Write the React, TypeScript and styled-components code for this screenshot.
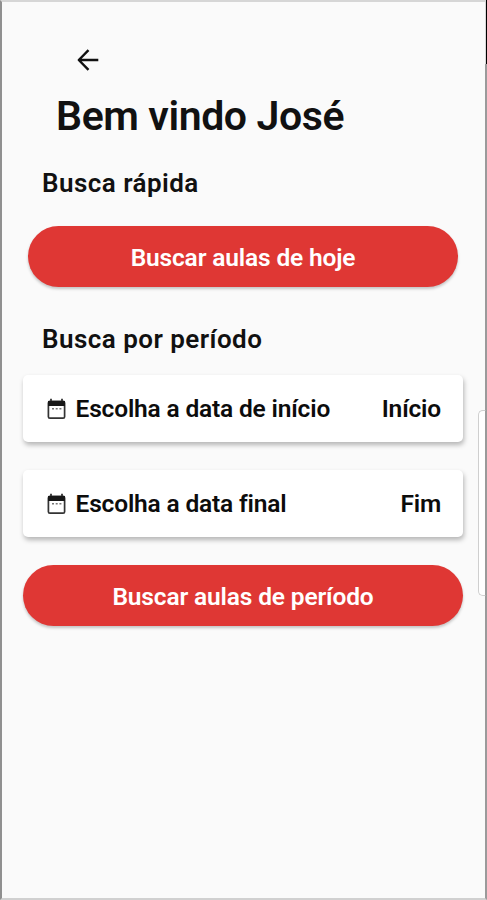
import React from "react";
import styled, { createGlobalStyle } from "styled-components";

const GlobalStyle = createGlobalStyle`
  * { box-sizing: border-box; }
  body { margin: 0; background: #fafafa; }
`;

const Frame = styled.div`
  position: relative;
  width: 487px;
  height: 900px;
  overflow: hidden;
`;

const Screen = styled.main`
  width: 100%;
  height: 100%;
  display: flex;
  flex-direction: column;
  padding: 46px 22px 0 21px;
  background: #fafafa;
  border-top: 2px solid #d6d6d6;
  border-bottom: 2px solid #d0d0d0;
  border-left: 2px solid #909090;
  border-right: 2px solid #9a9a9a;
  font-family: Roboto, "Noto Sans", sans-serif;
  font-weight: 600;
  color: #111;
`;

const BackButton = styled.button`
  width: 24px;
  height: 24px;
  margin-left: 53px;
  padding: 0;
  border: 0;
  background: none;
  color: #111;
  svg { display: block; }
`;

const Title = styled.h1`
  margin: 20px 0 0 33px;
  font-size: 41px;
  line-height: 48px;
  font-weight: 600;
  letter-spacing: -0.4px;
  white-space: nowrap;
`;

const SectionTitle = styled.h2<{ $top: number }>`
  margin: ${({ $top }) => $top}px 0 0 19px;
  font-size: 26px;
  line-height: 32px;
  font-weight: 600;
  letter-spacing: 0.46px;
  white-space: nowrap;
`;

const PillButton = styled.button<{ $top: number; $inset?: number }>`
  flex: none;
  height: 61px;
  margin: ${({ $top, $inset = 0 }) => `${$top}px ${$inset}px 0`};
  padding: 2px 0 0;
  border: 0;
  border-radius: 31px;
  background: #df3734;
  color: #fff;
  font: inherit;
  font-size: 24.5px;
  line-height: 59px;
  letter-spacing: -0.15px;
  box-shadow: 0 2px 3px rgba(0, 0, 0, 0.22);
`;

const DateCard = styled.div<{ $top: number }>`
  flex: none;
  display: flex;
  align-items: center;
  height: 67px;
  margin-top: ${({ $top }) => $top}px;
  padding: 0 22px 0 24px;
  border-radius: 5px;
  background: #fff;
  color: #0c0c0c;
  font-size: 24.5px;
  line-height: 30px;
  letter-spacing: -0.17px;
  white-space: nowrap;
  box-shadow: 1px 3px 5px rgba(0, 0, 0, 0.28);
`;

const CardLabel = styled.span`
  flex: 1;
  margin-left: 9.5px;
`;

const ScrollHandle = styled.div`
  position: absolute;
  top: 410px;
  right: 1px;
  width: 8px;
  height: 186px;
  border: 1px solid #cfcfcf;
  border-right-color: #9a9a9a;
  border-radius: 5px 0 0 5px;
  background: #fff;
`;

const EdgeMark = styled.div`
  position: absolute;
  top: 0;
  right: 0;
  width: 1px;
  height: 64px;
  background: #000;
  box-shadow: -1px 0 0 #d8d8d8;
`;

const ArrowIcon = () => (
  <svg width="24" height="24" viewBox="0 0 24 24" fill="none" stroke="currentColor" strokeWidth="2.4" strokeLinejoin="round">
    <path d="M22.3 12H3M12.5 2.2L2.8 12l9.7 9.8" />
  </svg>
);

const CalendarIcon = () => (
  <svg width="19" height="22" viewBox="0 0 19 22">
    <path d="M4 .8v4M15 .8v4" stroke="#333" strokeWidth="1.8" />
    <rect x="1.4" y="3.4" width="16.2" height="16.8" rx="1.5" fill="none" stroke="#333" strokeWidth="1.7" />
    <path d="M1 3h17v5H1z" fill="#181818" />
    <path d="M5 10.8h2M8.7 10.8h2M12.4 10.8h2" stroke="#777" strokeWidth="1.4" />
  </svg>
);

const DateField = ({ top, label, value }: { top: number; label: string; value: string }) => (
  <DateCard $top={top}>
    <CalendarIcon />
    <CardLabel>{label}</CardLabel>
    <span>{value}</span>
  </DateCard>
);

export default function App() {
  return (
    <>
      <GlobalStyle />
      <Frame>
        <Screen>
          <BackButton aria-label="Voltar">
            <ArrowIcon />
          </BackButton>
          <Title>Bem vindo José</Title>
          <SectionTitle $top={27}>Busca rápida</SectionTitle>
          <PillButton $top={27} $inset={5}>Buscar aulas de hoje</PillButton>
          <SectionTitle $top={36}>Busca por período</SectionTitle>
          <DateField top={20} label="Escolha a data de início" value="Início" />
          <DateField top={28} label="Escolha a data final" value="Fim" />
          <PillButton $top={28}>Buscar aulas de período</PillButton>
        </Screen>
        <ScrollHandle />
        <EdgeMark />
      </Frame>
    </>
  );
}
